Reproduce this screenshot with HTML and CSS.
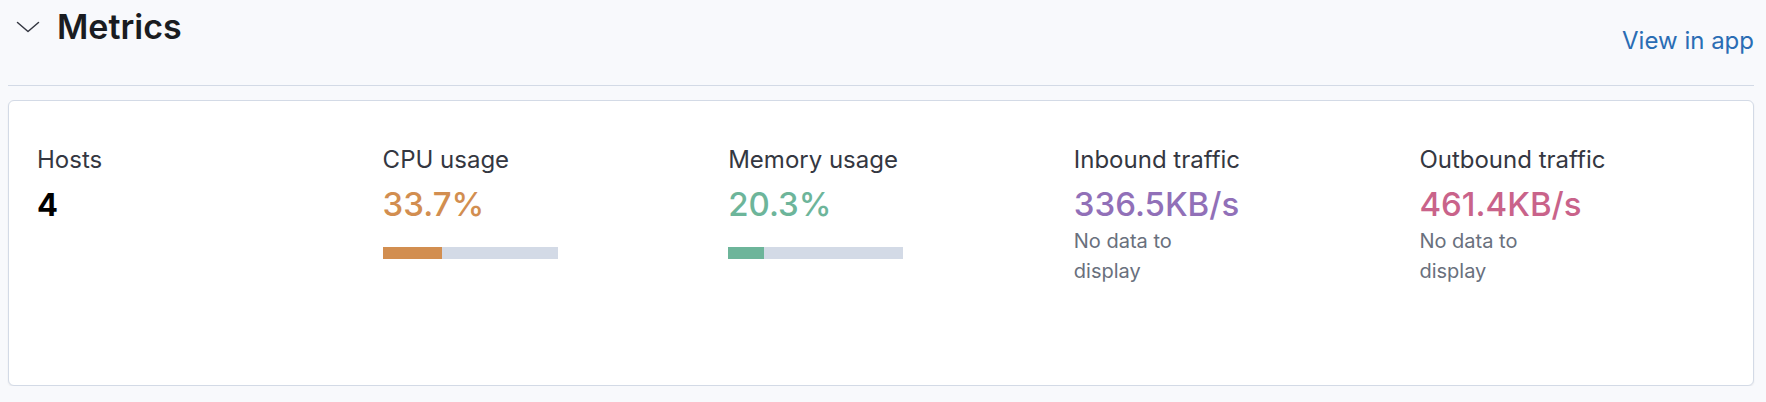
FILE: index.html
```html
<!DOCTYPE html>
<html lang="en">
<head>
<meta charset="utf-8">
<title>Metrics</title>
<link rel="stylesheet" href="styles.css">
</head>
<body>
<section class="section">
  <header class="header">
    <div class="header-left">
      <svg class="chevron" width="24" height="12" viewBox="0 0 24 12" aria-hidden="true">
        <polyline points="1.5,1.5 12,10.5 22.5,1.5" fill="none" stroke="#343741" stroke-width="1.5" stroke-linecap="round" stroke-linejoin="round"/>
      </svg>
      <h2 class="title">Metrics</h2>
    </div>
    <a class="link" href="#">View in app</a>
  </header>
  <div class="card">
    <div class="stat">
      <div class="label">Hosts</div>
      <div class="value"><span class="value-plain">4</span></div>
    </div>
    <div class="stat">
      <div class="label">CPU usage</div>
      <div class="value cpu">33.7%</div>
      <div class="bar"><div class="fill cpu-fill" style="width:33.7%"></div></div>
    </div>
    <div class="stat">
      <div class="label">Memory usage</div>
      <div class="value mem">20.3%</div>
      <div class="bar"><div class="fill mem-fill" style="width:20.3%"></div></div>
    </div>
    <div class="stat">
      <div class="label">Inbound traffic</div>
      <div class="value inb">336.5KB/s</div>
      <div class="nodata">No data to display</div>
    </div>
    <div class="stat">
      <div class="label">Outbound traffic</div>
      <div class="value outb">461.4KB/s</div>
      <div class="nodata">No data to display</div>
    </div>
  </div>
</section>
</body>
</html>
```
FILE: styles.css
```css
* { box-sizing: border-box; }
html, body {
  margin: 0;
  padding: 0;
  background: #f8f9fc;
  font-family: Inter, "Noto Sans", "Liberation Sans", sans-serif;
  color: #343741;
}
.section {
  margin: 0 12px 0 8px;
}
.header {
  display: flex;
  justify-content: space-between;
  align-items: flex-start;
  height: 86px;
  border-bottom: 1px solid #d3dae6;
}
.header-left {
  display: flex;
  align-items: center;
  padding-top: 7px;
  padding-left: 8px;
  gap: 17px;
}
.chevron { display: block; }
.title {
  margin: 0;
  font-size: 34px;
  line-height: 40px;
  font-weight: 600;
  color: #1a1c21;
}
.link {
  margin-top: 25px;
  font-size: 24px;
  line-height: 32px;
  color: #2a6db4;
  text-decoration: none;
}
.card {
  margin-top: 14px;
  min-height: 286px;
  background: #fff;
  border: 1px solid #d3dae6;
  border-radius: 6px;
  box-shadow: 0 1px 2px rgba(0, 0, 0, 0.07);
  padding: 43px 28px;
  display: grid;
  grid-template-columns: repeat(5, 1fr);
  column-gap: 40px;
  align-items: start;
}
.label {
  font-size: 24px;
  line-height: 32px;
  color: #343741;
}
.value {
  margin-top: 6px;
  font-size: 33px;
  line-height: 44px;
  font-weight: 500;
}
.value-plain {
  font-size: 31px;
  font-weight: 700;
  color: #000;
}
.cpu { color: #d28e50; }
.mem { color: #6db59a; }
.inb { color: #9170b8; }
.outb { color: #c9638a; }
.bar {
  margin-top: 21px;
  width: 175px;
  height: 12px;
  background: #d3dae6;
}
.fill { height: 100%; }
.cpu-fill { background: #d28e50; }
.mem-fill { background: #6db59a; }
.nodata {
  width: 150px;
  font-size: 20px;
  line-height: 30px;
  color: #69707d;
}
```
